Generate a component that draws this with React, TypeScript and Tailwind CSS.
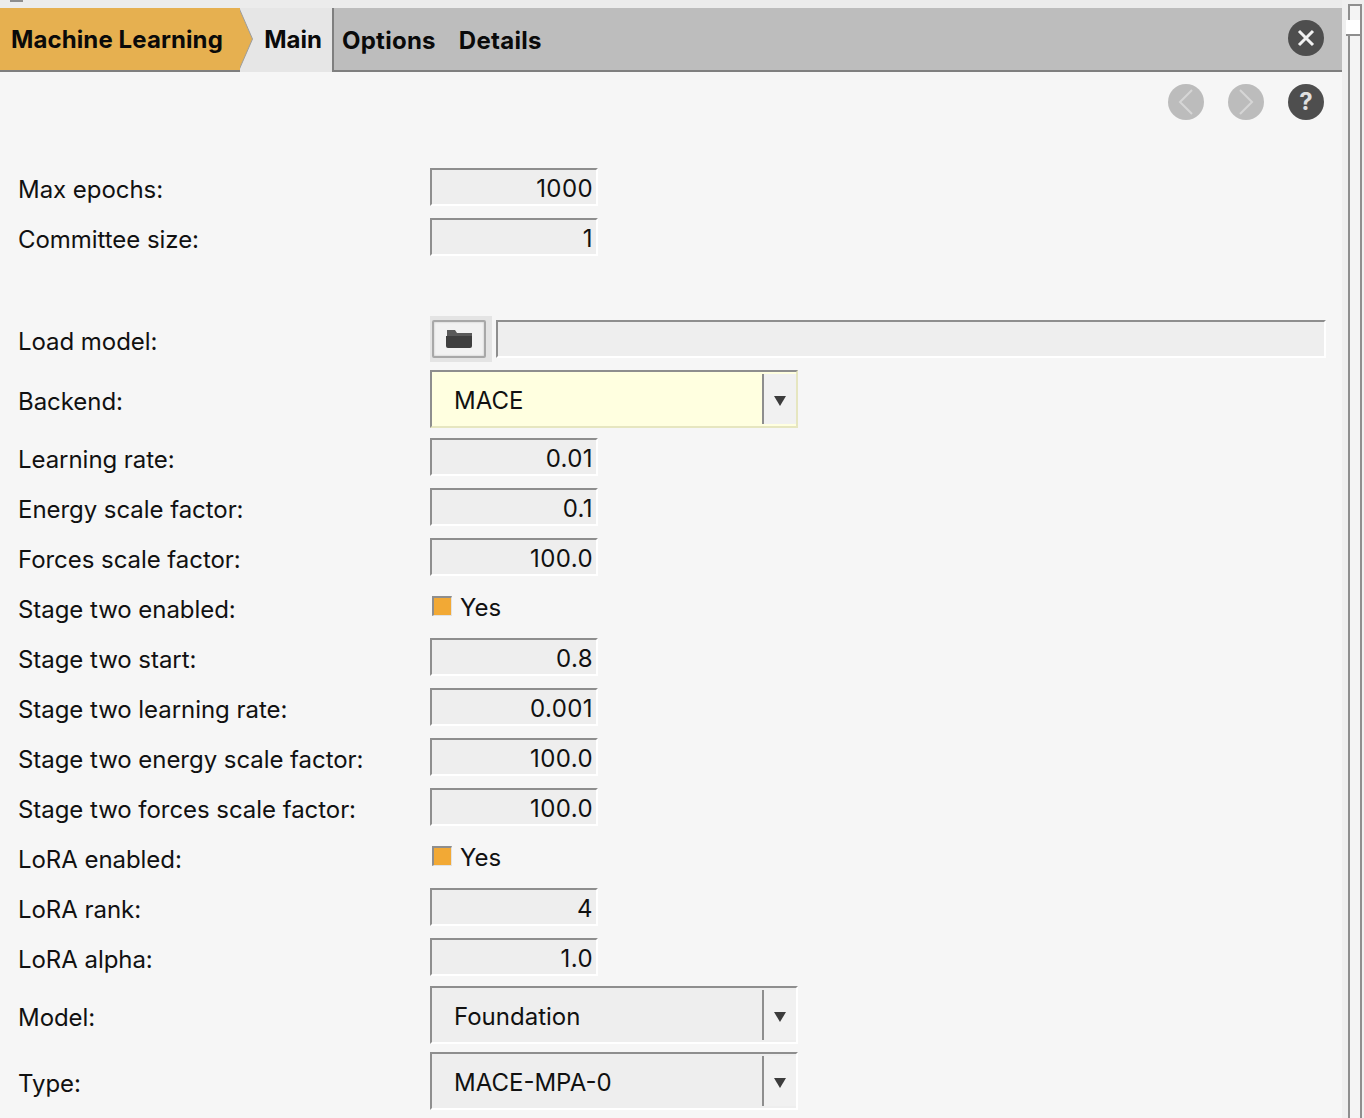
import type { ReactNode } from 'react';

const font = { fontFamily: 'Inter, "Liberation Sans", sans-serif' };

const Row = ({ label, className, children }: { label: string; className: string; children: ReactNode }) => (
  <div className={`flex items-center ${className}`}>
    <label className="mt-[5px] w-[412px] shrink-0 text-[24px] leading-[30px] tracking-[-0.05px] text-[#111]">{label}</label>
    {children}
  </div>
);

const NumberField = ({ value }: { value: string }) => (
  <div className="h-[38px] w-[168px] border-t-2 border-r-2 border-b-2 border-l-2 border-t-[#8e8e8e] border-l-[#8e8e8e] border-r-white border-b-white bg-[#eeeeee] pr-[3px] text-right text-[24px] leading-[38px] tracking-[0.4px] text-[#111]">
    {value}
  </div>
);

const Check = () => (
  <div className="flex items-center">
    <span className="mb-[2px] ml-[2px] box-border h-[20px] w-[20px] border-t-2 border-r border-b border-l-2 border-t-[#8e8e8e] border-r-[#e2e2e2] border-b-[#e2e2e2] border-l-[#8e8e8e] bg-[#f2a935]" />
    <span className="mt-[2px] ml-[8px] text-[24px] leading-[32px] text-[#111]">Yes</span>
  </div>
);

const Combo = ({ value, highlight }: { value: string; highlight?: boolean }) => (
  <div
    className={`flex h-[58px] w-[368px] border-t-2 border-r-2 border-b-2 border-l-2 border-t-[#8e8e8e] border-l-[#8e8e8e] ${
      highlight ? 'border-r-[#e6e6c0] border-b-[#e6e6c0] bg-[#ffffe0]' : 'border-r-white border-b-white bg-[#eeeeee]'
    }`}
  >
    <div className="flex-1 pl-[22px] text-[24px] leading-[58px] text-[#111]">{value}</div>
    <div className="my-[2px] flex h-[50px] w-[34px] items-center justify-center border-l-2 border-[#8e8e8e] bg-[#f1f1f1]">
      <svg width="14" height="12" viewBox="0 0 14 12" className="mt-[4px]">
        <path d="M1 1h12L7 11z" fill="#3c3c3c" />
      </svg>
    </div>
  </div>
);

const RoundButton = ({ dim, children }: { dim?: boolean; children: ReactNode }) => (
  <div className={`flex h-[36px] w-[36px] items-center justify-center rounded-full ${dim ? 'bg-[#bcbcbc]' : 'bg-[#4e4e4e]'}`}>
    {children}
  </div>
);

export default function App() {
  return (
    <div style={font} className="flex h-[1118px] w-[1364px] overflow-hidden bg-[#f6f6f6]">
      <div className="w-[1342px] shrink-0">
        <div className="h-[8px] bg-[#ececec] pl-[10px]">
          <div className="h-[2px] w-[13px] bg-[#8e8e8e]" />
        </div>

        <div className="flex h-[64px] bg-[#bdbdbd]">
          <div className="relative z-10 flex h-[64px] w-[240px] items-center border-b-2 border-[#7f7f7f] bg-[#e6b050] pt-[2px] pl-[11px]">
            <span className="whitespace-nowrap text-[24px] font-bold tracking-[0.1px] text-[#0a0a0a]">Machine Learning</span>
            <svg width="14" height="62" viewBox="0 0 14 62" className="absolute top-0 left-[240px]">
              <path d="M-1 0L12.5 31-1 62z" fill="#e6b050" stroke="#9d9d9d" strokeWidth="1" />
            </svg>
          </div>
          <div className="flex w-[92px] items-center justify-end bg-[#e6e6e6] pr-[10px]">
            <span className="relative z-20 text-[24px] font-bold text-[#0a0a0a]">Main</span>
          </div>
          <div className="flex flex-1 items-center border-b-2 border-l-2 border-[#7f7f7f] pr-[18px] pl-[8px]">
            <span className="mt-[4px] text-[24px] font-bold tracking-[0.25px] text-[#0a0a0a]">Options</span>
            <span className="mt-[4px] ml-[23px] text-[24px] font-bold tracking-[0.3px] text-[#0a0a0a]">Details</span>
            <div className="mb-[2px] ml-auto">
              <RoundButton>
                <svg width="20" height="20" viewBox="0 0 20 20">
                  <path d="M3 3l14 14M17 3L3 17" stroke="#f2f2f2" strokeWidth="3" />
                </svg>
              </RoundButton>
            </div>
          </div>
        </div>

        <div className="flex justify-end gap-[24px] pt-[12px] pr-[18px]">
          <RoundButton dim>
            <svg width="20" height="28" viewBox="0 0 20 28">
              <path d="M16 2L4 14l12 12" fill="none" stroke="#d6d6d6" strokeWidth="2" />
            </svg>
          </RoundButton>
          <RoundButton dim>
            <svg width="20" height="28" viewBox="0 0 20 28">
              <path d="M4 2l12 12L4 26" fill="none" stroke="#d6d6d6" strokeWidth="2" />
            </svg>
          </RoundButton>
          <RoundButton>
            <span className="text-[24px] font-bold leading-none text-[#e0e0e0]">?</span>
          </RoundButton>
        </div>

        <div className="pl-[18px] pt-[48px]">
          <Row label="Max epochs:" className="h-[38px]"><NumberField value="1000" /></Row>
          <Row label="Committee size:" className="mt-[12px] h-[38px]"><NumberField value="1" /></Row>

          <Row label="Load model:" className="mt-[60px] h-[46px]">
            <div className="h-[46px] w-[62px] bg-[#e4e4e4] pt-[4px] pl-[2px]">
              <div className="flex h-[38px] w-[54px] items-center justify-center rounded-[2px] border-2 border-[#a8a8a8] bg-[#f2f2f2] shadow-[inset_0_0_2px_#bbbbbb]">
                <svg width="30" height="20" viewBox="0 0 30 20">
                  <path d="M3 1h8l2 3h15v3H5L3 19z" fill="#5a5a5a" />
                  <path d="M2 7h26v10a2 2 0 0 1-2 2H4a2 2 0 0 1-2-2z" fill="#3f3f3f" />
                </svg>
              </div>
            </div>
            <div className="ml-[4px] h-[38px] w-[830px] border-t-2 border-r-2 border-b-2 border-l-2 border-t-[#8e8e8e] border-l-[#8e8e8e] border-r-white border-b-white bg-[#eeeeee]" />
          </Row>

          <Row label="Backend:" className="mt-[8px] h-[58px]"><Combo value="MACE" highlight /></Row>
          <Row label="Learning rate:" className="mt-[10px] h-[38px]"><NumberField value="0.01" /></Row>
          <Row label="Energy scale factor:" className="mt-[12px] h-[38px]"><NumberField value="0.1" /></Row>
          <Row label="Forces scale factor:" className="mt-[12px] h-[38px]"><NumberField value="100.0" /></Row>
          <Row label="Stage two enabled:" className="mt-[12px] h-[38px]"><Check /></Row>
          <Row label="Stage two start:" className="mt-[12px] h-[38px]"><NumberField value="0.8" /></Row>
          <Row label="Stage two learning rate:" className="mt-[12px] h-[38px]"><NumberField value="0.001" /></Row>
          <Row label="Stage two energy scale factor:" className="mt-[12px] h-[38px]"><NumberField value="100.0" /></Row>
          <Row label="Stage two forces scale factor:" className="mt-[12px] h-[38px]"><NumberField value="100.0" /></Row>
          <Row label="LoRA enabled:" className="mt-[12px] h-[38px]"><Check /></Row>
          <Row label="LoRA rank:" className="mt-[12px] h-[38px]"><NumberField value="4" /></Row>
          <Row label="LoRA alpha:" className="mt-[12px] h-[38px]"><NumberField value="1.0" /></Row>
          <Row label="Model:" className="mt-[10px] h-[58px]"><Combo value="Foundation" /></Row>
          <Row label="Type:" className="mt-[8px] h-[58px]"><Combo value="MACE-MPA-0" /></Row>
        </div>
      </div>

      <div className="flex-1 bg-[#efefef] pt-[4px] pl-[6px]">
        <div className="relative h-[1114px] w-[14px] border-t-2 border-r-2 border-l-2 border-[#8e8e8e] bg-[#f4f4f4]">
          <div className="absolute top-[14px] left-[-4px] h-[16px] w-[16px] border-r-2 border-b-2 border-[#8e8e8e] bg-white" />
        </div>
      </div>
    </div>
  );
}
